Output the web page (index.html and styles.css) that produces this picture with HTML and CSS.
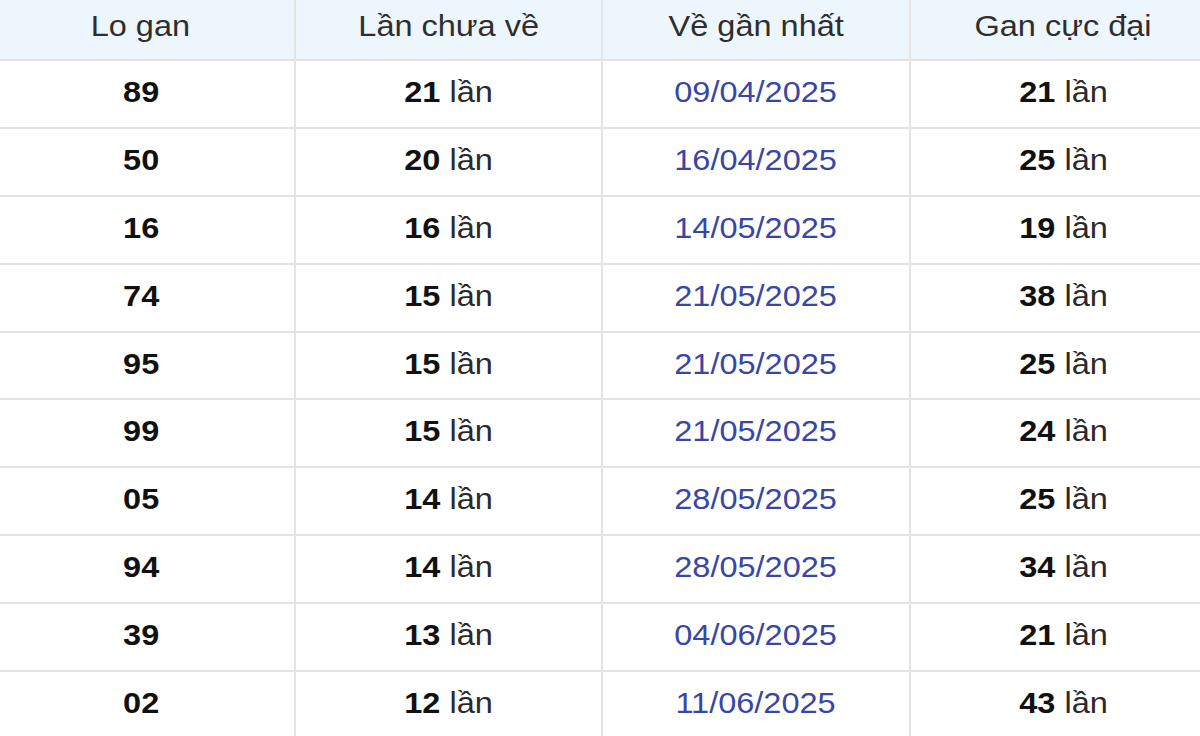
FILE: index.html
```html
<!DOCTYPE html>
<html lang="vi">
<head>
<meta charset="utf-8">
<title>Lo gan</title>
<link rel="stylesheet" href="styles.css">
</head>
<body>
<table class="gan-table">
  <thead>
    <tr>
      <th><span class="t">Lo gan</span></th>
      <th><span class="t">Lần chưa về</span></th>
      <th><span class="t">Về gần nhất</span></th>
      <th><span class="t">Gan cực đại</span></th>
    </tr>
  </thead>
  <tbody>
    <tr><td><span class="t num">89</span></td><td><span class="t"><b>21</b> lần</span></td><td><span class="t date">09/04/2025</span></td><td><span class="t"><b>21</b> lần</span></td></tr>
    <tr><td><span class="t num">50</span></td><td><span class="t"><b>20</b> lần</span></td><td><span class="t date">16/04/2025</span></td><td><span class="t"><b>25</b> lần</span></td></tr>
    <tr><td><span class="t num">16</span></td><td><span class="t"><b>16</b> lần</span></td><td><span class="t date">14/05/2025</span></td><td><span class="t"><b>19</b> lần</span></td></tr>
    <tr><td><span class="t num">74</span></td><td><span class="t"><b>15</b> lần</span></td><td><span class="t date">21/05/2025</span></td><td><span class="t"><b>38</b> lần</span></td></tr>
    <tr><td><span class="t num">95</span></td><td><span class="t"><b>15</b> lần</span></td><td><span class="t date">21/05/2025</span></td><td><span class="t"><b>25</b> lần</span></td></tr>
    <tr><td><span class="t num">99</span></td><td><span class="t"><b>15</b> lần</span></td><td><span class="t date">21/05/2025</span></td><td><span class="t"><b>24</b> lần</span></td></tr>
    <tr><td><span class="t num">05</span></td><td><span class="t"><b>14</b> lần</span></td><td><span class="t date">28/05/2025</span></td><td><span class="t"><b>25</b> lần</span></td></tr>
    <tr><td><span class="t num">94</span></td><td><span class="t"><b>14</b> lần</span></td><td><span class="t date">28/05/2025</span></td><td><span class="t"><b>34</b> lần</span></td></tr>
    <tr><td><span class="t num">39</span></td><td><span class="t"><b>13</b> lần</span></td><td><span class="t date">04/06/2025</span></td><td><span class="t"><b>21</b> lần</span></td></tr>
    <tr><td><span class="t num">02</span></td><td><span class="t"><b>12</b> lần</span></td><td><span class="t date">11/06/2025</span></td><td><span class="t"><b>43</b> lần</span></td></tr>
  </tbody>
</table>
</body>
</html>
```
FILE: styles.css
```css
html, body {
  margin: 0;
  padding: 0;
  background: #ffffff;
  overflow: hidden;
}

body {
  font-family: "Liberation Sans", Arial, sans-serif;
  color: #222222;
}

.gan-table {
  border-collapse: collapse;
  table-layout: fixed;
  width: 1232px;
  margin-left: -14px;
  margin-top: -8px;
}

.gan-table th,
.gan-table td {
  width: 25%;
  border: 2px solid #e4e4e4;
  text-align: center;
  vertical-align: middle;
  font-size: 29px;
  line-height: 33px;
}

.gan-table th {
  height: 65px;
  padding: 0;
  background: #eef6fd;
  font-weight: normal;
  color: #2e2e2e;
}

.gan-table td {
  height: 62.9px;
  padding: 0 0 3px 0;
  color: #2a2a2a;
}

.t {
  display: inline-block;
  transform: scaleX(1.12);
  white-space: nowrap;
}

.num,
.t b {
  font-weight: bold;
  color: #111111;
}

.date {
  color: #3846a6;
}
```
